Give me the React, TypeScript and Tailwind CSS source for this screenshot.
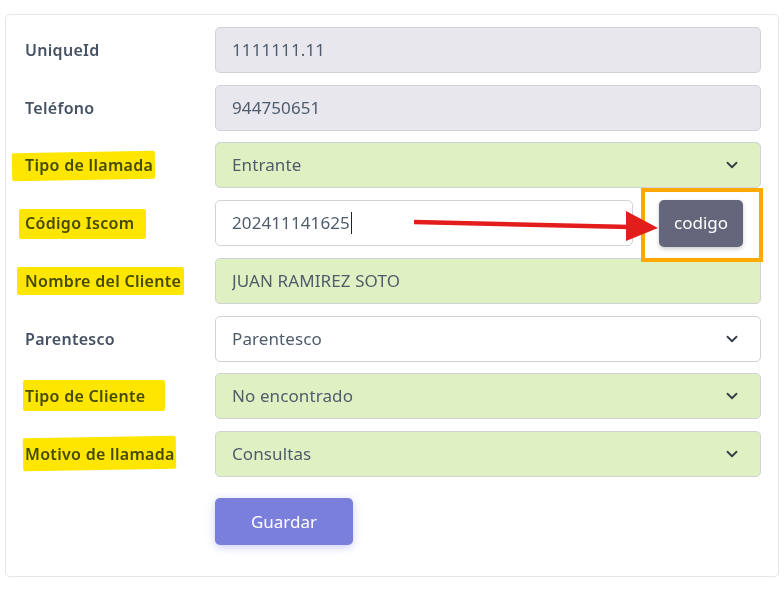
import { ChevronDown } from "lucide-react";

type Field = {
  label: string;
  value: string;
  kind: "readonly" | "select" | "input" | "filled" | "plain-select";
  mark?: string; // highlight box classes
};

const fields: Field[] = [
  { label: "UniqueId", value: "1111111.11", kind: "readonly" },
  { label: "Teléfono", value: "944750651", kind: "readonly" },
  { label: "Tipo de llamada", value: "Entrante", kind: "select", mark: "left-[-13px] top-[-2px] w-[143px] h-[28px] -rotate-1" },
  { label: "Código Iscom", value: "202411141625", kind: "input", mark: "left-[-6px] top-[-3px] w-[127px] h-[30px]" },
  { label: "Nombre del Cliente", value: "JUAN RAMIREZ SOTO", kind: "filled", mark: "left-[-8px] top-[-3px] w-[167px] h-[28px]" },
  { label: "Parentesco", value: "Parentesco", kind: "plain-select" },
  { label: "Tipo de Cliente", value: "No encontrado", kind: "select", mark: "left-[-2px] top-[-5px] w-[142px] h-[31px]" },
  { label: "Motivo de llamada", value: "Consultas", kind: "select", mark: "left-[-2px] top-[-6px] w-[153px] h-[33px] rotate-[-1deg]" },
];

function Control({ f }: { f: Field }) {
  const bg =
    f.kind === "readonly"
      ? "bg-[#e8e7ee]"
      : f.kind === "select" || f.kind === "filled"
      ? "bg-[#dff0c3]"
      : "bg-white";
  const hasChevron = f.kind === "select" || f.kind === "plain-select";

  return (
    <div
      className={`h-[46px] rounded-[5px] border border-[#cfd2d7] ${bg} flex items-center pl-4 pr-[19px] text-[17px] tracking-[0.1px] text-[#4f5c6c]`}
    >
      <span className="flex-1 truncate">
        {f.value}
        {f.kind === "input" && <span className="inline-block w-px h-[22px] bg-[#222] align-middle ml-px -mt-1" />}
      </span>
      {hasChevron && <ChevronDown className="w-[18px] h-[18px] text-[#363c46]" strokeWidth={2.4} />}
    </div>
  );
}

export default function App() {
  return (
    <div className="min-h-screen bg-white pt-[14px] pl-[5px] font-['Noto_Sans',sans-serif] relative">
      <div className="w-[774px] border border-[#e6e6e9] rounded-[5px] pt-[12px] pb-[31px] pl-[19px] pr-[17px]">
        <div className="grid grid-cols-[190px_1fr] gap-y-[11.5px] items-center">
          {fields.map((f) => (
            <div key={f.label} className="contents">
              <div className="relative">
                <span className="relative text-[16px] tracking-[0.3px] font-semibold text-[#465263]">
                  {f.label}
                  {f.mark && (
                    <span className={`absolute ${f.mark} bg-[#ffe600] mix-blend-multiply rounded-[2px]`} />
                  )}
                </span>
              </div>
              {f.kind === "input" ? (
                <div className="flex items-center">
                  <div className="w-[418px]">
                    <Control f={f} />
                  </div>
                  <div className="relative ml-[26px]">
                    <button className="w-[84px] h-[47px] rounded-[5px] bg-[#64677b] text-white text-[17px] shadow-[0_2px_4px_rgba(0,0,0,0.2)]">
                      codigo
                    </button>
                    <div className="absolute left-[-18px] top-[-12px] w-[122px] h-[74px] border-[4px] border-[#ffa800]" />
                  </div>
                </div>
              ) : (
                <Control f={f} />
              )}
            </div>
          ))}
          <div />
          <div className="pt-[10px]">
            <button className="w-[138px] h-[47px] rounded-[5px] bg-[#7b7fdc] text-white text-[17px] shadow-[0_2px_8px_rgba(105,108,255,0.35)]">
              Guardar
            </button>
          </div>
        </div>
      </div>

      {/* red annotation arrow */}
      <svg className="absolute left-0 top-0 pointer-events-none" width="784" height="605">
        <line x1="414" y1="222" x2="630" y2="227" stroke="#e31c1c" strokeWidth="4.5" />
        <polygon points="626,211 658,228 626,241" fill="#e31c1c" />
      </svg>
    </div>
  );
}
